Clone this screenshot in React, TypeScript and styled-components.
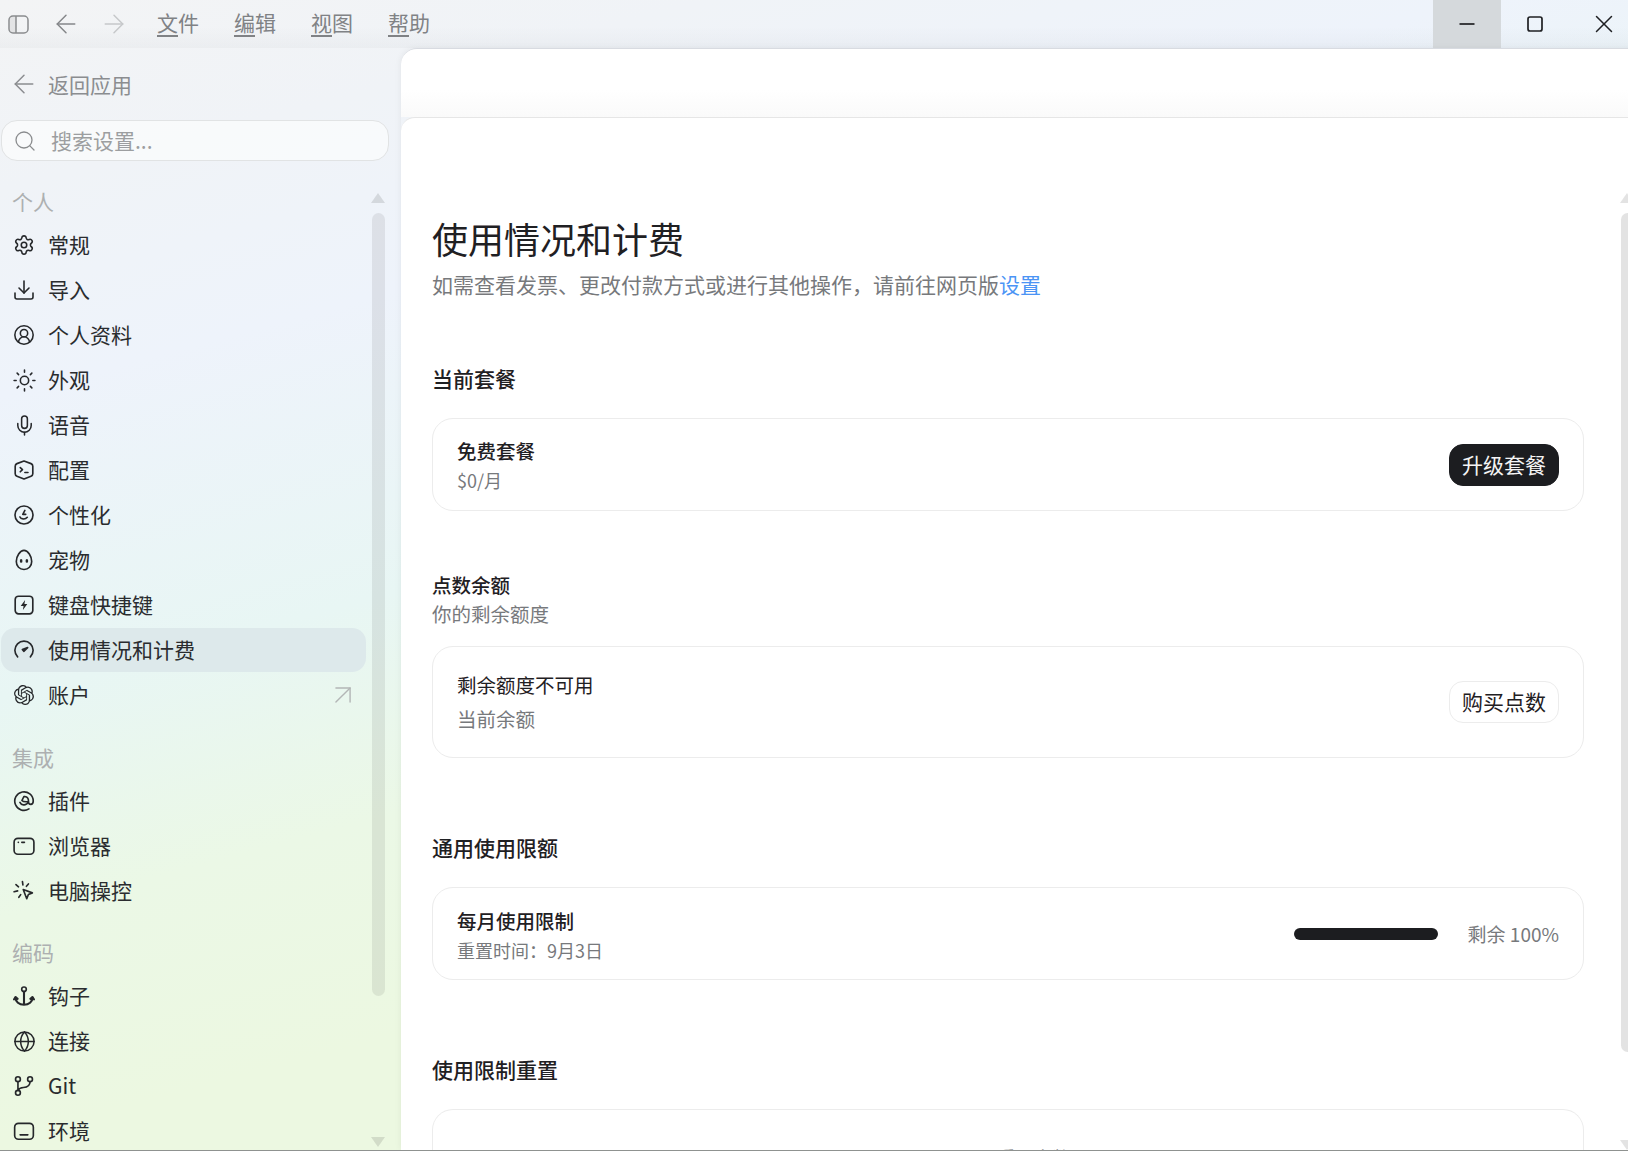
import React from 'react';
import styled, { createGlobalStyle } from 'styled-components';
import { ArrowLeft, ArrowRight, ArrowUpRight, CircleUserRound, Download, Globe, Mic, Search, Settings, Sun, X } from 'lucide-react';
import { SiOpenai } from 'react-icons/si';

const GlobalStyle = createGlobalStyle`
  html, body {
    margin: 0;
    padding: 0;
    height: 100%;
    overflow: hidden;
  }
  body {
    font-family: 'Noto Sans CJK SC', 'Liberation Sans', sans-serif;
    color: #1f2023;
  }
  * {
    box-sizing: border-box;
  }
`;

const Frame = styled.div`
  width: 1628px;
  height: 1151px;
  display: flex;
  flex-direction: column;
  overflow: hidden;
  border-bottom: 1px solid #8f9290;
  background: linear-gradient(165deg, #f3f4f5 0%, #f0f3f7 12%, #eef3fb 25%, #e8f6f4 44%, #ebf8e6 58%, #ecf8e1 72%, #ecf8e1 100%);
`;

const TitleBar = styled.div`
  width: 1638px;
  height: 48px;
  flex: none;
  display: flex;
  align-items: stretch;
  background: linear-gradient(180deg, transparent 55%, rgba(60, 70, 80, 0.035) 100%);
`;
const PanelToggle = styled.div`
  display: flex;
  align-items: center;
  width: 42px;
  padding-left: 8px;
  color: #8a8c8e;
`;
const NavArrow = styled.div<{ $off?: boolean }>`
  display: flex;
  align-items: center;
  justify-content: center;
  width: 48px;
  color: ${(p) => (p.$off ? '#c6c8ca' : '#85878a')};
`;
const MenuBar = styled.div`
  display: flex;
  align-items: center;
  gap: 35px;
  margin-left: 19px;
  padding-bottom: 5px;
`;
const MenuItem = styled.span`
  font-size: 21px;
  line-height: 30px;
  color: #808285;
  u {
    text-underline-offset: 4px;
    text-decoration-thickness: 1.5px;
  }
`;
const WindowControls = styled.div`
  display: flex;
  margin-left: auto;
`;
const WindowButton = styled.div<{ $hover?: boolean }>`
  width: 68.5px;
  display: flex;
  align-items: center;
  justify-content: center;
  color: #1f2023;
  background: ${(p) => (p.$hover ? '#d5d9dc' : 'transparent')};
`;
const TitleFill = styled.div`
  flex: 1;
`;

const Columns = styled.div`
  width: 1634px;
  flex: 1;
  min-height: 0;
  display: flex;
`;

const Sidebar = styled.aside`
  width: 401px;
  flex: none;
  display: flex;
  flex-direction: column;
  padding-left: 1px;
  overflow: hidden;
`;
const BackRow = styled.div`
  height: 72px;
  flex: none;
  display: flex;
  align-items: center;
  gap: 9px;
  padding-left: 8px;
  font-size: 21px;
  color: #8b8d90;
`;
const SearchBox = styled.div`
  width: 388px;
  height: 41px;
  flex: none;
  display: flex;
  align-items: center;
  gap: 14px;
  padding: 0 0 2px 11px;
  border-radius: 16px;
  border: 1px solid #e1e3e4;
  background: rgba(255, 255, 255, 0.55);
  font-size: 21px;
  color: #9c9ea0;
  svg {
    flex: none;
    color: #8a8c8e;
    margin-top: 2px;
  }
`;
const NavArea = styled.div`
  flex: 1;
  min-height: 0;
  display: flex;
  gap: 5px;
  padding-top: 20px;
`;
const NavList = styled.nav`
  width: 365px;
  flex: none;
  display: flex;
  flex-direction: column;
`;
const NavGroupLabel = styled.div<{ $first?: boolean }>`
  height: 42px;
  flex: none;
  margin-top: ${(p) => (p.$first ? '0' : '18.5px')};
  padding-left: 11px;
  font-size: 21px;
  line-height: 40px;
  color: #adb0b1;
`;
const NavItem = styled.div<{ $active?: boolean }>`
  height: 44px;
  flex: none;
  margin-bottom: 1px;
  display: flex;
  align-items: center;
  gap: 14px;
  padding: 0 6px 0 13px;
  border-radius: 14px;
  font-size: 21px;
  color: #2a2c2f;
  background: ${(p) => (p.$active ? '#dde9eb' : 'transparent')};
`;
const NavIcon = styled.span`
  width: 20px;
  height: 24px;
  flex: none;
  display: flex;
  align-items: center;
  justify-content: center;
  color: #26282b;
  svg {
    flex: none;
  }
`;
const NavLabel = styled.span`
  margin-bottom: 2px;
`;
const NavTrail = styled.span`
  margin-left: auto;
  display: flex;
  color: #b3b6b6;
`;

const ScrollTrack = styled.div<{ $top: number; $bottom: number }>`
  width: 14px;
  flex: none;
  display: flex;
  flex-direction: column;
  align-items: center;
  padding: ${(p) => p.$top}px 0 ${(p) => p.$bottom}px;
`;
const ScrollArrow = styled.div<{ $down?: boolean }>`
  width: 0;
  height: 0;
  flex: none;
  border-left: 7px solid transparent;
  border-right: 7px solid transparent;
  ${(p) =>
    p.$down ? 'border-top: 10px solid rgba(0,0,0,0.11);' : 'border-bottom: 10px solid rgba(0,0,0,0.11);'}
`;
const ScrollThumb = styled.div<{ $height: number; $tone: number }>`
  width: 13px;
  height: ${(p) => p.$height}px;
  flex: none;
  margin-top: 10px;
  border-radius: 7px;
  background: rgba(0, 0, 0, ${(p) => p.$tone});
`;
const ScrollGap = styled.div`
  flex: 1;
`;

const Main = styled.main`
  flex: 1;
  min-width: 0;
  display: flex;
  flex-direction: column;
  border-top-left-radius: 16px;
  box-shadow: -1px 0 6px rgba(0, 0, 0, 0.05);
`;
const MainHeader = styled.div`
  height: 69px;
  flex: none;
  border-top-left-radius: 16px;
  border-top: 1px solid #d8dbe1;
  background: linear-gradient(180deg, #ffffff 60%, #fafafa 100%);
`;
const MainBody = styled.div`
  flex: 1;
  min-height: 0;
  display: flex;
  background: #fff;
  border-top: 1px solid #e6e6e6;
  border-top-left-radius: 14px;
  overflow: hidden;
`;
const Content = styled.div`
  flex: 1;
  min-width: 0;
  padding: 95px 36px 0 31px;
`;
const PageTitle = styled.h1`
  margin: 0;
  font-size: 36px;
  line-height: 50px;
  font-weight: 400;
  color: #1f2023;
`;
const PageSub = styled.p`
  margin: 6px 0 0;
  font-size: 21px;
  line-height: 30px;
  color: #77797c;
  a {
    color: #4b94f5;
    text-decoration: none;
  }
`;
const SectionHead = styled.h2<{ $top: number }>`
  margin: ${(p) => p.$top}px 0 25px;
  font-size: 21px;
  line-height: 30px;
  font-weight: 500;
  color: #1f2023;
`;
const SmallHead = styled.h2`
  margin: 59px 0 0;
  font-size: 19.5px;
  line-height: 30px;
  font-weight: 500;
  color: #1f2023;
`;
const SectionNote = styled.p`
  margin: -1px 0 17px;
  font-size: 19.5px;
  line-height: 30px;
  color: #77797c;
`;
const Card = styled.div<{ $height: number; $open?: boolean }>`
  height: ${(p) => p.$height}px;
  display: flex;
  align-items: center;
  justify-content: space-between;
  padding: 0 24px;
  border: 1px solid #ececec;
  border-radius: 21px;
  ${(p) => p.$open && 'border-bottom: none; border-bottom-left-radius: 0; border-bottom-right-radius: 0;'}
`;
const CardText = styled.div<{ $gap: number; $push?: number; $lift?: number }>`
  display: flex;
  flex-direction: column;
  gap: ${(p) => p.$gap}px;
  padding-top: ${(p) => p.$push || 0}px;
  padding-bottom: ${(p) => p.$lift || 0}px;
`;
const CardTitle = styled.div<{ $bold?: boolean }>`
  font-size: 19.5px;
  line-height: 28px;
  font-weight: ${(p) => (p.$bold ? 500 : 400)};
  color: #1f2023;
`;
const CardSub = styled.div<{ $size: number }>`
  font-size: ${(p) => p.$size}px;
  line-height: 28px;
  color: #77797c;
`;
const ActionButton = styled.div<{ $primary?: boolean }>`
  width: 110px;
  height: 42px;
  display: flex;
  align-items: center;
  justify-content: center;
  padding-bottom: 2px;
  border-radius: 14px;
  font-size: 21px;
  color: ${(p) => (p.$primary ? '#f4f4f4' : '#1f2023')};
  background: ${(p) => (p.$primary ? '#1c1d20' : '#fff')};
  border: 1px solid ${(p) => (p.$primary ? '#1c1d20' : '#ececec')};
`;
const UsageRow = styled.div`
  display: flex;
  align-items: center;
  gap: 30px;
`;
const UsageBar = styled.div`
  width: 144px;
  height: 12px;
  border-radius: 6px;
  background: #1c1d20;
`;
const UsageText = styled.span`
  font-size: 19px;
  color: #77797c;
`;
const CardCaption = styled.div`
  width: 100%;
  height: 100%;
  text-align: center;
  padding: 33px 0 0 52px;
  font-size: 18px;
  line-height: 28px;
  color: #77797c;
`;

const Draw = ({ children, size = 22 }: { children: React.ReactNode; size?: number }) => (
  <svg width={size} height={size} viewBox="0 0 20 20" fill="none" stroke="currentColor" strokeWidth={1.5} strokeLinecap="round" strokeLinejoin="round">
    {children}
  </svg>
);

const PanelIcon = () => (
  <svg width="21" height="21" viewBox="0 0 21 21" fill="none" stroke="currentColor" strokeWidth="1.5">
    <rect x="1" y="2" width="19" height="17" rx="4" />
    <path d="M8 2v17" />
    <path d="M4.5 2.8h3.5v15.4H4.5a2.8 2.8 0 0 1-2.7-2.8V5.6a2.8 2.8 0 0 1 2.7-2.8z" fill="currentColor" fillOpacity="0.15" stroke="none" />
  </svg>
);
const ProfileIcon = () => (
  <Draw>
    <path d="M10 1.900 16.400 4.200c1 .4 1.600 1.200 1.600 2.300v6.900c0 1-.6 1.900-1.600 2.300L10 18.100l-6.400-2.400C2.600 15.300 2 14.400 2 13.400V6.500c0-1.100.6-1.900 1.600-2.300z" />
    <path d="m6.600 7.800 2 1.900-2 1.900M10.800 12.300h2.800" />
  </Draw>
);
const PersonalIcon = () => (
  <Draw>
    <circle cx="10" cy="10" r="8.200" />
    <path d="M10.800 5.800 8.900 9.400h2.700M6.300 11.800c.9 1.900 4.600 2.700 6.700.3" />
  </Draw>
);
const PetIcon = () => (
  <Draw>
    <path d="M10 1.300c3.600 0 7 5.500 7 10 0 4.300-3 7.300-7 7.300s-7-3-7-7.300c0-4.500 3.400-10 7-10z" />
    <ellipse cx="7.400" cy="10.800" rx="1.200" ry="1.700" fill="currentColor" stroke="none" />
    <ellipse cx="12.600" cy="10.800" rx="1.200" ry="1.700" fill="currentColor" stroke="none" />
  </Draw>
);
const KeysIcon = () => (
  <Draw>
    <rect x="2" y="2" width="16" height="16" rx="3" />
    <path d="M11 5.500 7 10.800h2.600L9 14.500l4-5.300h-2.600z" fill="currentColor" stroke="none" />
  </Draw>
);
const GaugeIcon = () => (
  <Draw>
    <path d="M4.200 16.200a8.300 8.300 0 1 1 11.600 0" />
    <path d="m13.300 7.800-4.800 1.800 1.300 1.600z" fill="currentColor" />
  </Draw>
);
const PluginIcon = () => (
  <Draw>
    <path d="M14.500 17.200A8.400 8.400 0 1 1 18.400 10c0 1.800-.9 3-2.200 3-1.300 0-2.200-1-2.200-2.400" />
    <path d="M6.300 11.300c.8 1.700 2.900 2.600 4.800 2 2-.6 3.200-2.500 2.900-4.300-.3-1.700-1.800-3.100-3.700-3.100M9.900 5.900 8.100 9.600c1 1.200 2.700 1.300 5.900 1" />
  </Draw>
);
const BrowserIcon = () => (
  <Draw>
    <rect x="1" y="3" width="18" height="14.500" rx="3.500" />
    <path d="M4.800 6.700h.1M8 6.700h2.400" />
  </Draw>
);
const ClickIcon = () => (
  <Draw>
    <path d="m9.300 8.600 8.300 3.100-3.600 1.500-1.500 3.800z" />
    <path d="M8.600 1.500 9 4.500M2.700 4.200l2.300 2M1 10.700l3.200-.8M5.300 15.700l1.700-2.400M14 3.600l-1.800 2.100" />
  </Draw>
);
const HookIcon = () => (
  <Draw>
    <circle cx="10" cy="3.900" r="2.100" />
    <path d="M10 6v12M2.300 11.300c0 3.900 3.200 6.700 7.700 6.700s7.700-2.800 7.700-6.700" strokeWidth="1.900" />
    <path d="m1 13 1.300-2 1.900 1.600M15.800 12.600l1.900-1.600 1.300 2" strokeWidth="1.900" />
  </Draw>
);
const GitIcon = () => (
  <Draw>
    <circle cx="4.500" cy="3.800" r="2.200" />
    <circle cx="4.500" cy="16.200" r="2.200" />
    <circle cx="15.500" cy="3.800" r="2.200" />
    <path d="M4.500 6v8M15.500 6c0 3.300-2.400 5.200-6 5.400-2.500.1-4.200 1-5 2.600" />
  </Draw>
);
const EnvIcon = () => (
  <Draw>
    <rect x="1.500" y="3" width="17" height="14.500" rx="3.500" />
    <path d="M6.500 13.500h7" />
  </Draw>
);

type Item = { label: string; icon: React.ReactNode; active?: boolean; external?: boolean };
type Group = { label: string; items: Item[] };

const groups: Group[] = [
  {
    label: '个人',
    items: [
      { label: '常规', icon: <Settings size={22} strokeWidth={1.7} /> },
      { label: '导入', icon: <Download size={24} strokeWidth={1.6} /> },
      { label: '个人资料', icon: <CircleUserRound size={22} strokeWidth={1.7} /> },
      { label: '外观', icon: <Sun size={25} strokeWidth={1.5} /> },
      { label: '语音', icon: <Mic size={23} strokeWidth={1.6} /> },
      { label: '配置', icon: <ProfileIcon /> },
      { label: '个性化', icon: <PersonalIcon /> },
      { label: '宠物', icon: <PetIcon /> },
      { label: '键盘快捷键', icon: <KeysIcon /> },
      { label: '使用情况和计费', icon: <GaugeIcon />, active: true },
      { label: '账户', icon: <SiOpenai size={20} />, external: true },
    ],
  },
  {
    label: '集成',
    items: [
      { label: '插件', icon: <PluginIcon /> },
      { label: '浏览器', icon: <BrowserIcon /> },
      { label: '电脑操控', icon: <ClickIcon /> },
    ],
  },
  {
    label: '编码',
    items: [
      { label: '钩子', icon: <HookIcon /> },
      { label: '连接', icon: <Globe size={23} strokeWidth={1.6} /> },
      { label: 'Git', icon: <GitIcon /> },
      { label: '环境', icon: <EnvIcon /> },
    ],
  },
];

const menus = [
  ['文', '件'],
  ['编', '辑'],
  ['视', '图'],
  ['帮', '助'],
];

// full-width comma and colon, as in the original copy
const subtitleText = '如需查看发票、更改付款方式或进行其他操作\uFF0C请前往网页版';
const resetText = '重置时间\uFF1A9月3日';

const App = () => {
  return (
    <Frame>
      <GlobalStyle />
      <TitleBar>
        <PanelToggle>
          <PanelIcon />
        </PanelToggle>
        <NavArrow>
          <ArrowLeft size={30} strokeWidth={1.2} />
        </NavArrow>
        <NavArrow $off>
          <ArrowRight size={30} strokeWidth={1.2} />
        </NavArrow>
        <MenuBar>
          {menus.map(([first, rest]) => (
            <MenuItem key={first}>
              <u>{first}</u>
              {rest}
            </MenuItem>
          ))}
        </MenuBar>
        <TitleFill />
        <WindowControls>
          <WindowButton $hover>
            <svg width="16" height="16" viewBox="0 0 16 16" stroke="currentColor" strokeWidth="1.7">
              <path d="M0.500 8h15" />
            </svg>
          </WindowButton>
          <WindowButton>
            <svg width="16" height="16" viewBox="0 0 16 16" fill="none" stroke="currentColor" strokeWidth="1.7">
              <rect x="1" y="1" width="14" height="14" rx="2" />
            </svg>
          </WindowButton>
          <WindowButton>
            <X size={30} strokeWidth={1.2} />
          </WindowButton>
        </WindowControls>
      </TitleBar>
      <Columns>
        <Sidebar>
          <BackRow>
            <ArrowLeft size={30} strokeWidth={1.2} />
            返回应用
          </BackRow>
          <SearchBox>
            <Search size={24} strokeWidth={1.3} />
            搜索设置...
          </SearchBox>
          <NavArea>
            <NavList>
              {groups.map((group, index) => (
                <React.Fragment key={group.label}>
                  <NavGroupLabel $first={index === 0}>{group.label}</NavGroupLabel>
                  {group.items.map((item) => (
                    <NavItem key={item.label} $active={item.active}>
                      <NavIcon>{item.icon}</NavIcon>
                      <NavLabel>{item.label}</NavLabel>
                      {item.external && (
                        <NavTrail>
                          <ArrowUpRight size={34} strokeWidth={1} />
                        </NavTrail>
                      )}
                    </NavItem>
                  ))}
                </React.Fragment>
              ))}
            </NavList>
            <ScrollTrack $top={12} $bottom={3}>
              <ScrollArrow />
              <ScrollThumb $height={783} $tone={0.075} />
              <ScrollGap />
              <ScrollArrow $down />
            </ScrollTrack>
          </NavArea>
        </Sidebar>
        <Main>
          <MainHeader />
          <MainBody>
            <Content>
              <PageTitle>使用情况和计费</PageTitle>
              <PageSub>
                {subtitleText}
                <a href="#settings">设置</a>
              </PageSub>

              <SectionHead $top={64}>当前套餐</SectionHead>
              <Card $height={93}>
                <CardText $gap={1} $push={1}>
                  <CardTitle $bold>免费套餐</CardTitle>
                  <CardSub $size={18}>$0/月</CardSub>
                </CardText>
                <ActionButton $primary>升级套餐</ActionButton>
              </Card>

              <SmallHead>点数余额</SmallHead>
              <SectionNote>你的剩余额度</SectionNote>
              <Card $height={112}>
                <CardText $gap={6} $lift={1}>
                  <CardTitle>剩余额度不可用</CardTitle>
                  <CardSub $size={19.5}>当前余额</CardSub>
                </CardText>
                <ActionButton>购买点数</ActionButton>
              </Card>

              <SectionHead $top={74}>通用使用限额</SectionHead>
              <Card $height={93}>
                <CardText $gap={1} $push={3}>
                  <CardTitle $bold>每月使用限制</CardTitle>
                  <CardSub $size={18}>{resetText}</CardSub>
                </CardText>
                <UsageRow>
                  <UsageBar />
                  <UsageText>剩余 100%</UsageText>
                </UsageRow>
              </Card>

              <SectionHead $top={74}>使用限制重置</SectionHead>
              <Card $height={100} $open>
                <CardCaption>重置次数</CardCaption>
              </Card>
            </Content>
            <ScrollTrack $top={75} $bottom={0}>
              <ScrollArrow />
              <ScrollThumb $height={839} $tone={0.11} />
              <ScrollGap />
              <ScrollArrow $down />
            </ScrollTrack>
          </MainBody>
        </Main>
      </Columns>
    </Frame>
  );
};

export default App;
